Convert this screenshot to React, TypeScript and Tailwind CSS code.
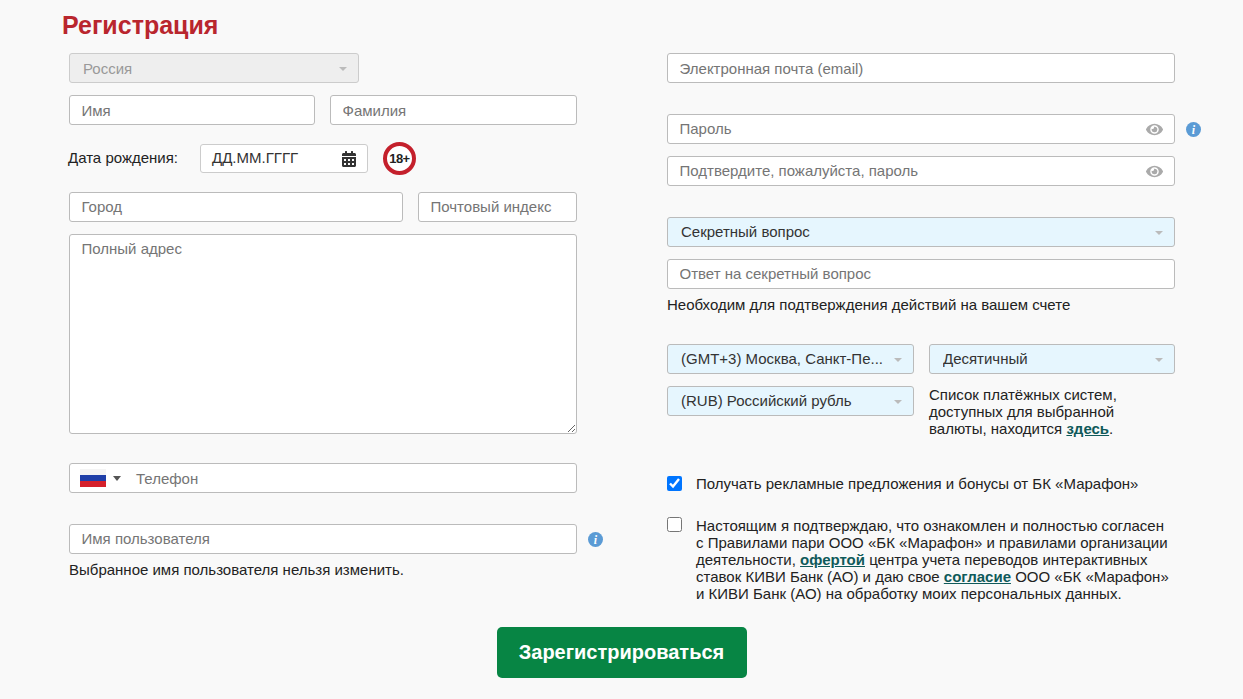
import React from "react";
import { FaEye, FaCalendarAlt } from "react-icons/fa";

const inputCls =
  "h-[30px] rounded-[3px] border border-[#bbb] bg-white pl-[11.5px] pr-3 text-[15px] text-[#333] placeholder-[#757575] outline-none";

const Input = ({ placeholder, className = "w-full pb-[2px]" }: { placeholder: string; className?: string }) => (
  <input placeholder={placeholder} className={inputCls + " " + className} />
);

const Caret = () => (
  <span className="ml-2 h-0 w-0 shrink-0 border-x-[4px] border-t-[4px] border-x-transparent border-t-[#bbb]" />
);

const Select = ({ label, className = "" }: { label: string; className?: string }) => (
  <div
    className={
      "flex h-[30px] items-center justify-between rounded-[3px] border border-[#bbb] bg-[#e6f6fe] pt-px pl-[13px] pr-[11px] text-[15px] text-[#333] " +
      className
    }
  >
    <span className="truncate">{label}</span>
    <Caret />
  </div>
);

const InfoBadge = () => (
  <span className="absolute top-[8px] -right-[26px] flex h-[15px] w-[15px] items-center justify-center rounded-full bg-[#5b9bd5] font-['Liberation_Serif',serif] text-[12px] font-bold text-white italic">
    i
  </span>
);

const Link = ({ children }: { children: React.ReactNode }) => (
  <a className="font-bold text-[#0f5a5a] underline">{children}</a>
);

const App = () => {
  return (
    <div className="h-[699px] w-[1243px] overflow-hidden bg-[#f9f9f9] font-['Liberation_Sans',Arial,sans-serif] text-[15px] text-[#222]">
      <h1 className="ml-[62px] pt-[11px] text-[25px] leading-[28px] font-bold text-[#b9262e]">Регистрация</h1>
      <div className="mt-[14px] ml-[69px] flex items-start">
        <div className="flex w-[508px] flex-col">
          <div className="flex h-[30px] w-[290px] items-center justify-between rounded-[3px] border border-[#ccc] bg-[#eeeeee] pt-[2px] pl-[13px] pr-[11px] text-[#999]">
            <span>Россия</span>
            <Caret />
          </div>
          <div className="mt-3 flex gap-[15px]">
            <Input placeholder="Имя" className="w-[246px] pt-px" />
            <Input placeholder="Фамилия" className="w-[247px] pt-px" />
          </div>
          <div className="mt-[19px] flex h-[29px] items-center">
            <span className="-ml-[1px] w-[132px] text-[#222]">Дата рождения:</span>
            <div className="flex h-[29px] w-[168px] items-center justify-between rounded-[3px] border border-[#ccc] bg-white pl-[11px] pr-[10px] text-[#333]">
              <span>ДД.ММ.ГГГГ</span>
              <FaCalendarAlt size={16} className="text-[#333]" />
            </div>
            <div className="ml-[15px] flex h-[33px] w-[33px] items-center justify-center rounded-full border-[4px] border-[#c4202c] bg-white text-[13px] font-bold tracking-[-0.6px] text-[#222]">
              18+
            </div>
          </div>
          <div className="mt-[19px] flex gap-[15px]">
            <Input placeholder="Город" className="h-[29px] w-[334px] pb-[2px]" />
            <Input placeholder="Почтовый индекс" className="h-[29px] w-[159px] pb-[2px]" />
          </div>
          <textarea
            placeholder="Полный адрес"
            className="mt-3 h-[200px] w-full rounded-[3px] border border-[#bbb] bg-white pl-[11.5px] pr-3 py-[3px] text-[15px] placeholder-[#757575] outline-none"
          />
          <div className="mt-[29px] flex h-[30px] items-center rounded-[3px] border border-[#bbb] bg-white">
            <div className="ml-[10px] flex h-[18px] w-[26px] flex-col overflow-hidden">
              <div className="h-1/3 bg-[#f4f4f4]" />
              <div className="h-1/3 bg-[#1f3fa8]" />
              <div className="h-1/3 bg-[#d5202b]" />
            </div>
            <span className="ml-[7px] h-0 w-0 border-x-[4px] border-t-[5px] border-x-transparent border-t-[#555]" />
            <span className="ml-[15px] pt-[3px] text-[#757575]">Телефон</span>
          </div>
          <div className="relative mt-[31px]">
            <Input placeholder="Имя пользователя" />
            <InfoBadge />
          </div>
          <p className="mt-[7px] leading-[17px] text-[#222]">Выбранное имя пользователя нельзя изменить.</p>
        </div>
        <div className="ml-[90px] flex w-[508px] flex-col">
          <Input placeholder="Электронная почта (email)" className="w-full pt-px" />
          <div className="relative mt-[31px]">
            <Input placeholder="Пароль" />
            <FaEye size={17} className="absolute top-[7px] right-[12px] text-[#aaa]" />
            <InfoBadge />
          </div>
          <div className="relative mt-3">
            <Input placeholder="Подтвердите, пожалуйста, пароль" />
            <FaEye size={17} className="absolute top-[7px] right-[12px] text-[#aaa]" />
          </div>
          <Select label="Секретный вопрос" className="mt-[31px]" />
          <Input placeholder="Ответ на секретный вопрос" className="mt-3 w-full pb-[2px]" />
          <p className="mt-[7px] leading-[17px] text-[#222]">Необходим для подтверждения действий на вашем счете</p>
          <div className="mt-[31px] flex gap-[15px]">
            <div className="flex w-[247px] flex-col gap-3">
              <Select label="(GMT+3) Москва, Санкт-Пе..." />
              <Select label="(RUB) Российский рубль" />
            </div>
            <div className="flex w-[246px] flex-col">
              <Select label="Десятичный" className="pl-[12px]" />
              <p className="mt-[12px] leading-[17px] text-[#222]">
                Список платёжных систем,
                <br />
                доступных для выбранной
                <br />
                валюты, находится <Link>здесь</Link>.
              </p>
            </div>
          </div>
          <label className="mt-[38px] flex items-center gap-[14px] leading-[17px]">
            <input type="checkbox" defaultChecked className="h-[15px] w-[15px] accent-[#0075ff]" />
            Получать рекламные предложения и бонусы от БК «Марафон»
          </label>
          <label className="mt-[25px] flex items-start gap-[14px] leading-[17px]">
            <input type="checkbox" className="h-[15px] w-[15px] accent-[#0075ff]" />
            <span>
              Настоящим я подтверждаю, что ознакомлен и полностью согласен
              <br />с Правилами пари ООО «БК «Марафон» и правилами организации
              <br />
              деятельности, <Link>офертой</Link> центра учета переводов интерактивных
              <br />
              ставок КИВИ Банк (АО) и даю свое <Link>согласие</Link> ООО «БК «Марафон»
              <br />и КИВИ Банк (АО) на обработку моих персональных данных.
            </span>
          </label>
        </div>
      </div>
      <div className="mt-[25px] flex justify-center">
        <button className="h-[51px] w-[250px] rounded-[5px] bg-[#078544] pb-[2px] text-[20px] font-bold text-white">
          Зарегистрироваться
        </button>
      </div>
    </div>
  );
};

export default App;
